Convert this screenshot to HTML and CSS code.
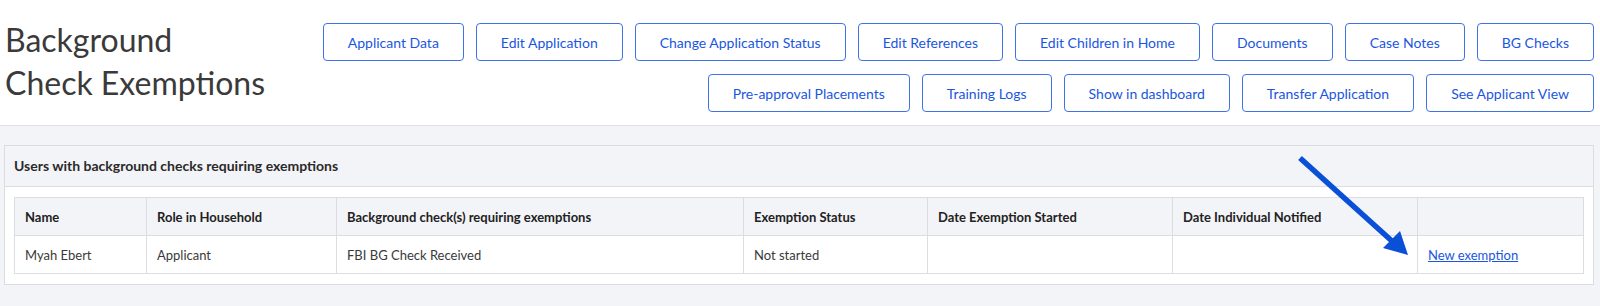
FILE: index.html
```html
<!DOCTYPE html>
<html lang="en">
<head>
  <meta charset="UTF-8">
  <meta name="viewport" content="width=device-width, initial-scale=1.0">
  <title>Background Check Exemptions</title>
  <link rel="stylesheet" href="styles.css">
</head>
<body>
  <div class="header">
    <h1 class="page-title">Background<br>Check Exemptions</h1>

    <div class="actions">
      <div class="btn-row">
        <button class="action-btn">Applicant Data</button>
        <button class="action-btn">Edit Application</button>
        <button class="action-btn">Change Application Status</button>
        <button class="action-btn">Edit References</button>
        <button class="action-btn">Edit Children in Home</button>
        <button class="action-btn">Documents</button>
        <button class="action-btn">Case Notes</button>
        <button class="action-btn">BG Checks</button>
      </div>
      <div class="btn-row">
        <button class="action-btn">Pre-approval Placements</button>
        <button class="action-btn">Training Logs</button>
        <button class="action-btn">Show in dashboard</button>
        <button class="action-btn">Transfer Application</button>
        <button class="action-btn">See Applicant View</button>
      </div>
    </div>
  </div>

  <div class="content">
    <div class="panel">
      <div class="panel-heading">Users with background checks requiring exemptions</div>
      <div class="panel-body">
        <table class="exemptions">
          <thead>
            <tr>
              <th>Name</th>
              <th>Role in Household</th>
              <th>Background check(s) requiring exemptions</th>
              <th>Exemption Status</th>
              <th>Date Exemption Started</th>
              <th>Date Individual Notified</th>
              <th></th>
            </tr>
          </thead>
          <tbody>
            <tr>
              <td>Myah Ebert</td>
              <td>Applicant</td>
              <td>FBI BG Check Received</td>
              <td>Not started</td>
              <td></td>
              <td></td>
              <td><a href="#" class="new-link">New exemption</a></td>
            </tr>
          </tbody>
        </table>
      </div>

      <!-- annotation arrow pointing at the link -->
      <svg class="pointer-arrow" width="140" height="110" viewBox="1280 152 140 110">
        <line x1="1299" y1="159" x2="1392" y2="243" stroke="#0a4fd8" stroke-width="5.5"/>
        <polygon points="1407,256 1382,249 1399,232" fill="#0a4fd8"/>
      </svg>
    </div>
  </div>
</body>
</html>
```

FILE: styles.css
```css
:root {
  --blue: #1a56e0;
  --blue-border: #3d73e6;
  --grey-bg: #f3f4f8;
  --line: #dcdde2;
  --text: #333;
}

body {
  margin: 0;
  background: var(--grey-bg);
  font-family: Lato, "Liberation Sans", sans-serif;
  color: var(--text);
}

/* top bar with title and action buttons */
.header {
  display: flex;
  justify-content: space-between;
  background: #fff;
  border-bottom: 1px solid #e2e3e8;
  padding: 18px 6px 13px 5px;
}

.page-title {
  margin: 0;
  white-space: nowrap;
  font-size: 32px;
  font-weight: normal;
  line-height: 43px;
  color: #3a3a3a;
}

.actions {
  display: flex;
  flex-direction: column;
  align-items: flex-end;
  gap: 13px;
  padding-top: 5px;
}

.btn-row {
  display: flex;
  gap: 12px;
}

.action-btn {
  height: 38px;
  padding: 0 24px;
  background: #fff;
  border: 1px solid var(--blue-border);
  border-radius: 4px;
  color: var(--blue);
  font-family: Lato, "Liberation Sans", sans-serif;
  font-size: 14px;
  cursor: pointer;
}

.content {
  padding: 19px 6px 20px 4px;
}

.panel {
  position: relative;
  background: #fff;
  border: 1px solid var(--line);
}

.panel-heading {
  height: 40px;
  line-height: 40px;
  padding: 0 9px;
  background: var(--grey-bg);
  border-bottom: 1px solid var(--line);
  font-size: 14px;
  font-weight: bold;
  color: #2a2a2a;
}

.panel-body {
  padding: 10px 9px 10px 9px;
}

.exemptions {
  width: 100%;
  border-collapse: collapse;
  font-size: 13px;
}

.exemptions th,
.exemptions td {
  height: 37px;
  padding: 0 10px;
  border: 1px solid var(--line);
  text-align: left;
  vertical-align: middle;
}

.exemptions th {
  background: var(--grey-bg);
  font-weight: bold;
  color: #222;
}

.exemptions td {
  color: #3a3a3a;
}

.exemptions th:nth-child(1) { width: 111px; }
.exemptions th:nth-child(2) { width: 169px; }
.exemptions th:nth-child(3) { width: 386px; }
.exemptions th:nth-child(4) { width: 163px; }
.exemptions th:nth-child(5) { width: 224px; }
.exemptions th:nth-child(6) { width: 224px; }

.new-link {
  color: var(--blue);
  text-decoration: underline;
}

.pointer-arrow {
  position: absolute;
  left: 1276px;
  top: 5px;
}
```
